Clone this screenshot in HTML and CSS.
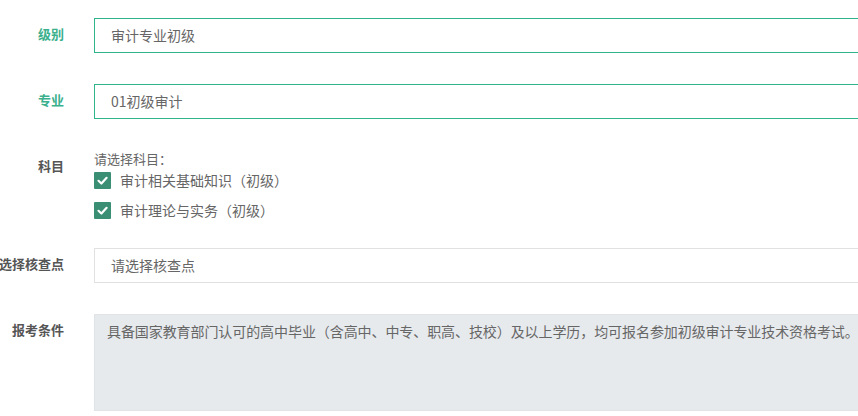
FILE: index.html
```html
<!DOCTYPE html>
<html lang="zh">
<head>
<meta charset="utf-8">
<link rel="stylesheet" href="styles.css">
</head>
<body>
<div class="form">
  <div class="item">
    <div class="label active">级别</div>
    <div class="control"><div class="input focus">审计专业初级</div></div>
  </div>
  <div class="item">
    <div class="label active">专业</div>
    <div class="control"><div class="input focus">01初级审计</div></div>
  </div>
  <div class="item subject">
    <div class="label">科目</div>
    <div class="control">
      <div class="hint">请选择科目：</div>
      <label class="check"><span class="box"><svg viewBox="0 0 17 17" width="17" height="17"><path d="M4.5 8.8 L7.4 11.5 L12.6 5.8" fill="none" stroke="#fff" stroke-width="2.2" stroke-linecap="round" stroke-linejoin="round"/></svg></span><span class="ctext">审计相关基础知识（初级）</span></label>
      <label class="check"><span class="box"><svg viewBox="0 0 17 17" width="17" height="17"><path d="M4.5 8.8 L7.4 11.5 L12.6 5.8" fill="none" stroke="#fff" stroke-width="2.2" stroke-linecap="round" stroke-linejoin="round"/></svg></span><span class="ctext">审计理论与实务（初级）</span></label>
    </div>
  </div>
  <div class="item">
    <div class="label">选择核查点</div>
    <div class="control"><div class="input">请选择核查点</div></div>
  </div>
  <div class="item last">
    <div class="label">报考条件</div>
    <div class="control"><div class="textarea">具备国家教育部门认可的高中毕业（含高中、中专、职高、技校）及以上学历，均可报名参加初级审计专业技术资格考试。</div></div>
  </div>
</div>
</body>
</html>
```

FILE: styles.css
```css
html, body {
  margin: 0;
  padding: 0;
  background: #fff;
  overflow: hidden;
  width: 858px;
  height: 416px;
}
body {
  font-family: "Noto Sans CJK SC", "Liberation Sans", sans-serif;
  color: #666;
}
.form {
  padding-top: 18px;
}
.item {
  display: flex;
  align-items: flex-start;
  margin-bottom: 31px;
}
.item.subject {
  margin-bottom: 29px;
}
.item.last {
  margin-bottom: 0;
}
.label {
  width: 64px;
  flex: 0 0 64px;
  text-align: right;
  white-space: nowrap;
  direction: rtl;
  font-size: 13px;
  font-weight: bold;
  line-height: 31px;
  color: #555;
  margin-right: 30px;
}
.label.active {
  color: #3bb08d;
}
.control {
  flex: 0 0 auto;
  width: 764px;
}
.input {
  box-sizing: border-box;
  height: 35px;
  line-height: 32px;
  border: 1px solid #e1e1e1;
  border-right: 0;
  padding: 0 16px;
  font-size: 14px;
  color: #666;
  white-space: nowrap;
}
.input.focus {
  border-color: #2fb58e;
}
.hint {
  font-size: 13px;
  line-height: 18px;
  color: #666;
  margin-bottom: 4px;
}
.check {
  display: flex;
  align-items: center;
  height: 17px;
  margin-bottom: 13px;
  font-size: 14px;
  color: #666;
}
.check:last-child {
  margin-bottom: 0;
}
.box {
  display: inline-flex;
  width: 17px;
  height: 17px;
  background: #3a8e74;
  border-radius: 1px;
  margin-right: 9px;
}
.box svg {
  display: block;
}
.ctext {
  line-height: 17px;
}
.textarea {
  box-sizing: border-box;
  height: 97px;
  background: #e7eaed;
  border: 1px solid #e1e4e7;
  border-right: 0;
  padding: 6px 0 6px 12px;
  line-height: 20px;
  font-size: 14px;
  letter-spacing: -0.08px;
  color: #666;
  white-space: nowrap;
}
```
